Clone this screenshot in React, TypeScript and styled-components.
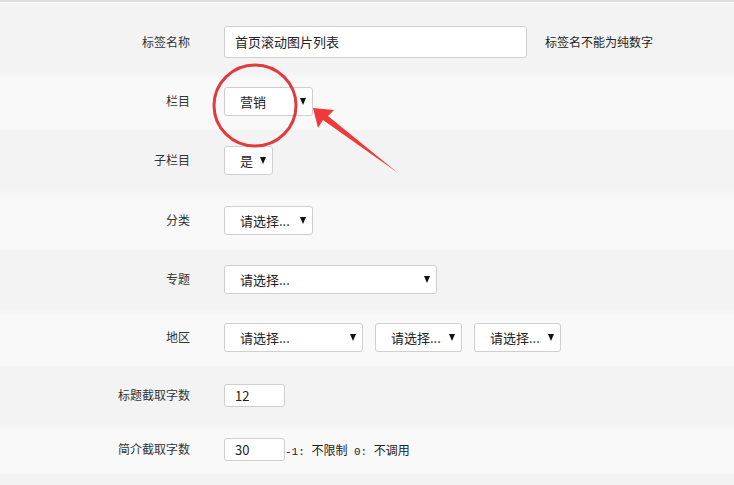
import React from "react";
import styled, { createGlobalStyle } from "styled-components";

const Global = createGlobalStyle`
  html, body { margin: 0; padding: 0; background: #f3f3f3; }
  body { font-family: "Noto Sans CJK SC", "Liberation Sans", sans-serif; color: #333; }
  * { box-sizing: border-box; }
`;

const Page = styled.div`
  position: relative;
  width: 734px;
  height: 485px;
  overflow: hidden;
  background: #f3f3f3;
  border-top: 2px solid #dedede;
`;

const TopSheen = styled.div`
  height: 1px;
  background: #fafafa;
`;

const Row = styled.div<{ $h: number; $light?: boolean; $pt?: number }>`
  display: grid;
  grid-template-columns: 190px 1fr;
  column-gap: 34px;
  align-items: center;
  height: ${(p) => p.$h}px;
  padding-top: ${(p) => p.$pt ?? 0}px;
  background: ${(p) =>
    p.$light ? "linear-gradient(#f3f3f3 0px, #f9f9f9 8px, #f9f9f9 100%)" : "#f3f3f3"};
`;

const Label = styled.div`
  text-align: right;
  font-size: 12px;
  line-height: 16px;
  color: #333;
`;

const Controls = styled.div`
  display: flex;
  align-items: center;
  gap: 12px;
`;

const TextBox = styled.div<{ $w: number; $h: number }>`
  width: ${(p) => p.$w}px;
  height: ${(p) => p.$h}px;
  background: #fff;
  border: 1px solid #cfcfcf;
  border-radius: 3px;
  display: flex;
  align-items: center;
  padding-left: 10px;
  font-size: 13px;
  color: #222;
`;

const Select = styled.div<{ $w: number }>`
  width: ${(p) => p.$w}px;
  height: 29px;
  background: #fff;
  border: 1px solid #cfcfcf;
  border-radius: 3px;
  display: flex;
  align-items: center;
  justify-content: space-between;
  padding: 0 6px 0 15px;
  font-size: 13px;
  color: #222;
`;

const Caret = styled.span`
  width: 0;
  height: 0;
  border-left: 3.5px solid transparent;
  border-right: 3.5px solid transparent;
  border-top: 7px solid #111;
  margin-top: 1px;
`;

const Hint = styled.span<{ $ml?: number }>`
  margin-left: ${(p) => p.$ml ?? 0}px;
  font-size: 12px;
  color: #222;
  white-space: nowrap;
`;

const Mono = styled.span`
  font-family: "Liberation Mono", monospace;
  font-size: 11px;
`;

const Annotation = styled.svg`
  position: absolute;
  left: 0;
  top: 0;
  pointer-events: none;
`;

const Placeholder = "请选择...";

const Dropdown = ({ w, text }: { w: number; text: string }) => (
  <Select $w={w}>
    <span>{text}</span>
    <Caret />
  </Select>
);

export default function App() {
  return (
    <>
      <Global />
      <Page>
        <TopSheen />
        <Row $h={69} $pt={8}>
          <Label>标签名称</Label>
          <Controls>
            <TextBox $w={303} $h={32}>首页滚动图片列表</TextBox>
            <Hint $ml={6}>标签名不能为纯数字</Hint>
          </Controls>
        </Row>
        <Row $h={58} $light>
          <Label>栏目</Label>
          <Controls>
            <Dropdown w={89} text="营销" />
          </Controls>
        </Row>
        <Row $h={60}>
          <Label>子栏目</Label>
          <Controls>
            <Dropdown w={49} text="是" />
          </Controls>
        </Row>
        <Row $h={60} $light>
          <Label>分类</Label>
          <Controls>
            <Dropdown w={89} text={Placeholder} />
          </Controls>
        </Row>
        <Row $h={58}>
          <Label>专题</Label>
          <Controls>
            <Dropdown w={213} text={Placeholder} />
          </Controls>
        </Row>
        <Row $h={58} $light>
          <Label>地区</Label>
          <Controls>
            <Dropdown w={139} text={Placeholder} />
            <Dropdown w={87} text={Placeholder} />
            <Dropdown w={87} text={Placeholder} />
          </Controls>
        </Row>
        <Row $h={58}>
          <Label>标题截取字数</Label>
          <Controls>
            <TextBox $w={61} $h={23}>12</TextBox>
          </Controls>
        </Row>
        <Row $h={50} $light>
          <Label>简介截取字数</Label>
          <Controls>
            <TextBox $w={61} $h={23}>30</TextBox>
            <Hint $ml={-12}>
              <Mono>-1: </Mono>不限制<Mono> 0: </Mono>不调用
            </Hint>
          </Controls>
        </Row>
        <Annotation width="734" height="485" viewBox="0 0 734 485">
          <ellipse cx="255" cy="103.5" rx="41" ry="40.5" fill="none" stroke="#e23b3f" strokeWidth="3" />
          <polygon
            points="313,106 334,108 328,114 398,171 323,118 318,126"
            fill="#ee3a3a"
          />
        </Annotation>
      </Page>
    </>
  );
}
